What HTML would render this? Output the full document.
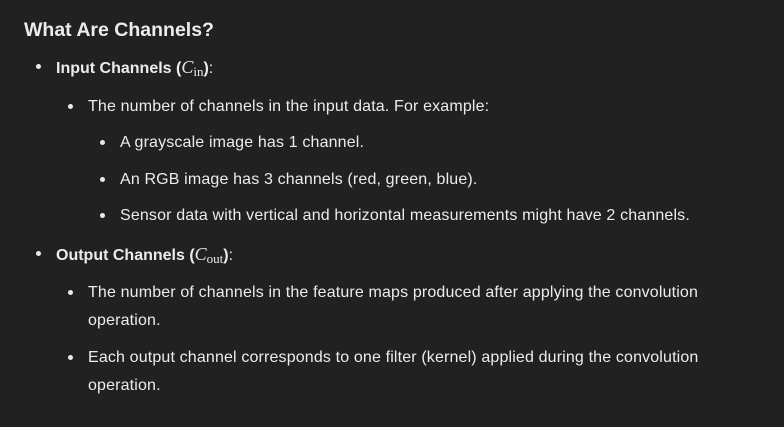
<!DOCTYPE html>
<html><head><style>
body{margin:0;width:784px;height:427px;background:#212121;color:#ececec;font-family:"Liberation Sans",sans-serif;font-size:16px;letter-spacing:0.15px;position:relative;overflow:hidden}
.l{position:absolute;white-space:nowrap;line-height:20px}
.b{position:absolute;width:5px;height:5px;border-radius:50%;background:#ececec}
h{font-weight:bold}
i{font-family:"Liberation Serif",serif;font-size:18px}
sub{font-family:"Liberation Serif",serif;font-size:13px;vertical-align:-3px}
</style></head><body>
<div class="l" style="left:24px;top:18px;font-size:19.5px;font-weight:bold;line-height:24px;letter-spacing:0">What Are Channels?</div>

<div class="b" style="left:36px;top:64px"></div>
<div class="l" style="left:56px;top:57px;letter-spacing:0"><h>Input Channels (</h><i>C</i><sub>in</sub><h>)</h>:</div>

<div class="b" style="left:68px;top:104px"></div>
<div class="l" style="left:88px;top:97px">The number of channels in the input data. For example:</div>

<div class="b" style="left:100px;top:140px"></div>
<div class="l" style="left:120px;top:133px">A grayscale image has 1 channel.</div>
<div class="b" style="left:100px;top:177px"></div>
<div class="l" style="left:120px;top:170px">An RGB image has 3 channels (red, green, blue).</div>
<div class="b" style="left:100px;top:213px"></div>
<div class="l" style="left:120px;top:206px">Sensor data with vertical and horizontal measurements might have 2 channels.</div>

<div class="b" style="left:36px;top:251px"></div>
<div class="l" style="left:56px;top:244px;letter-spacing:0"><h>Output Channels (</h><i>C</i><sub>out</sub><h>)</h>:</div>

<div class="b" style="left:68px;top:290px"></div>
<div class="l" style="left:88px;top:283px">The number of channels in the feature maps produced after applying the convolution</div>
<div class="l" style="left:88px;top:311px">operation.</div>
<div class="b" style="left:68px;top:355px"></div>
<div class="l" style="left:88px;top:348px">Each output channel corresponds to one filter (kernel) applied during the convolution</div>
<div class="l" style="left:88px;top:376px">operation.</div>
</body></html>
